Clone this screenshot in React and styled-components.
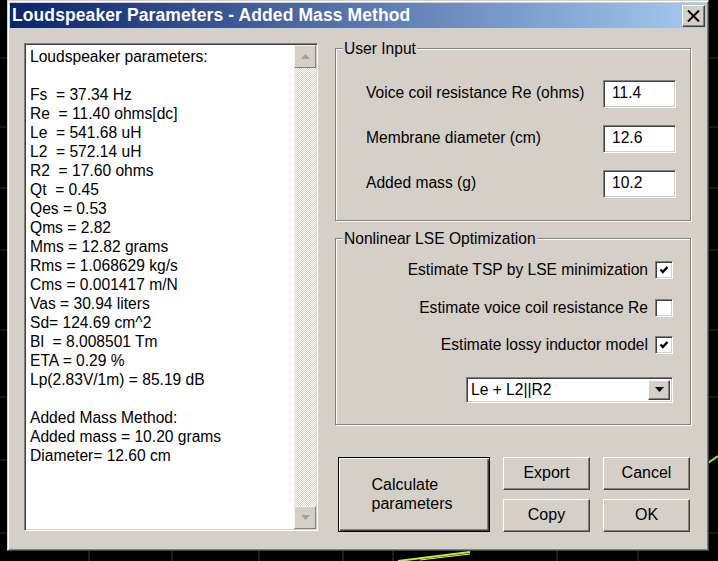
import React from 'react'
import styled, { createGlobalStyle } from 'styled-components'

const face = '#d4d0c8'
const shadow = '#808080'
const dark = '#404040'

const GlobalStyle = createGlobalStyle`
  html, body {
    margin: 0;
    padding: 0;
    background: #000;
  }
  body {
    font-family: "Liberation Sans", Arial, sans-serif;
    font-size: 15.6px;
    color: #000;
  }
`

const Screen = styled.div`
  position: relative;
  width: 718px;
  height: 561px;
  overflow: hidden;
  background: #000;
`

const Chart = styled.svg`
  position: absolute;
  left: 0;
  top: 0;
`

const Window = styled.div`
  position: relative;
  margin-left: 7px;
  width: 702px;
  height: 551px;
  box-sizing: border-box;
  background: ${face};
  border: 1px solid;
  border-color: ${face} ${dark} ${dark} ${face};
  box-shadow: inset 1px 1px #fff, inset -1px -1px ${shadow};
  padding: 2px;
  display: flex;
  flex-direction: column;
`

const TitleBar = styled.div`
  height: 25px;
  display: flex;
  align-items: center;
  justify-content: space-between;
  padding: 0 1px 0 2px;
  background: linear-gradient(to right, #0a246a, #a6caf0);
`

const Title = styled.div`
  color: #fff;
  font-weight: bold;
  font-size: 17.5px;
  letter-spacing: 0.1px;
`

const CloseButton = styled.div`
  width: 23px;
  height: 22px;
  box-sizing: border-box;
  background: ${face};
  border: 1px solid;
  border-color: #fff ${dark} ${dark} #fff;
  box-shadow: inset -1px -1px ${shadow};
  display: flex;
  align-items: center;
  justify-content: center;
`

const Body = styled.div`
  flex: 1;
  display: flex;
  padding: 15px 15px 0 14px;
  gap: 17px;
`

const TextPanel = styled.div`
  width: 294px;
  height: 488px;
  box-sizing: border-box;
  border: 1px solid;
  border-color: ${shadow} #fff #fff ${shadow};
  padding: 1px;
  box-shadow: inset 1px 1px ${dark}, inset -1px -1px ${face};
  display: flex;
`

const TextArea = styled.div`
  flex: 1;
  background: #fff;
  padding: 2px 4px;
  line-height: 19px;
  white-space: pre;
  overflow: hidden;
`

const ScrollBar = styled.div`
  width: 22px;
  display: flex;
  flex-direction: column;
`

const ScrollButton = styled.div`
  height: 23px;
  box-sizing: border-box;
  background: ${face};
  border: 1px solid;
  border-color: #f4f2ee ${shadow} ${shadow} #f4f2ee;
  display: flex;
  align-items: center;
  justify-content: center;
`

const Track = styled.div`
  flex: 1;
  background-color: #fff;
  background-image: repeating-conic-gradient(${face} 0 25%, #fff 0 50%);
  background-size: 2px 2px;
`

const RightColumn = styled.div`
  width: 356px;
  display: flex;
  flex-direction: column;
  margin-top: -4px;
`

const GroupBox = styled.fieldset`
  margin: ${(p) => p.$top || 0}px 0 0 0;
  padding: 0;
  min-width: 0;
  border: 1px solid ${shadow};
  box-shadow: inset 1px 1px #fff, 1px 1px #fff;
`

const Legend = styled.legend`
  margin-left: 7px;
  padding: 0 1px;
  line-height: 19px;
  background: ${face};
`

const InputGrid = styled.div`
  display: grid;
  grid-template-columns: 1fr 73px;
  row-gap: 17px;
  align-items: center;
  padding: 22px 14px 22px 30px;
`

const Label = styled.div`
  padding-bottom: 2px;
`

const TextInput = styled.div`
  height: 28px;
  box-sizing: border-box;
  background: #fff;
  border: 1px solid;
  border-color: ${shadow} #fff #fff ${shadow};
  box-shadow: inset 1px 1px ${dark}, inset -1px -1px ${face};
  padding: 2px 0 0 8px;
  line-height: 20px;
`

const OptionList = styled.div`
  display: flex;
  flex-direction: column;
  align-items: flex-end;
  gap: 19.5px;
  padding: 13px 17px 21px 0;
`

const CheckRow = styled.div`
  display: flex;
  align-items: center;
  gap: 7px;
  height: 18px;
`

const CheckBox = styled.div`
  width: 18px;
  height: 18px;
  box-sizing: border-box;
  background: #fff;
  border: 1px solid;
  border-color: ${shadow} #fff #fff ${shadow};
  box-shadow: inset 1px 1px ${dark}, inset -1px -1px ${face};
  display: flex;
  align-items: center;
  justify-content: center;
`

const Select = styled.div`
  margin-top: 3px;
  width: 207px;
  height: 26px;
  box-sizing: border-box;
  background: #fff;
  border: 1px solid;
  border-color: ${shadow} #fff #fff ${shadow};
  box-shadow: inset 1px 1px ${dark}, inset -1px -1px ${face};
  padding: 2px;
  display: flex;
  align-items: center;
`

const SelectValue = styled.div`
  flex: 1;
  padding-left: 2px;
`

const DropButton = styled.div`
  width: 22px;
  height: 100%;
  box-sizing: border-box;
  background: ${face};
  border: 1px solid;
  border-color: #fff ${dark} ${dark} #fff;
  box-shadow: inset -1px -1px ${shadow};
  display: flex;
  align-items: center;
  justify-content: center;
`

const ButtonGrid = styled.div`
  margin: 32px 0 0 3px;
  display: grid;
  grid-template-columns: 152px 87px 87px;
  grid-template-rows: 33px 33px;
  column-gap: 13px;
  row-gap: 9px;
`

const Button = styled.div`
  box-sizing: border-box;
  background: ${face};
  border: 1px solid;
  border-color: #fff ${dark} ${dark} #fff;
  box-shadow: inset -1px -1px ${shadow};
  display: flex;
  align-items: center;
  justify-content: center;
  font-size: 16px;
  ${(p) =>
    p.$default &&
    `
    grid-row: span 2;
    border: 1px solid #000;
    box-shadow: inset 1px 1px #fff, inset -1px -1px ${dark}, inset -2px -2px ${shadow};
  `}
`

const ButtonText = styled.div`
  text-align: left;
  line-height: 19px;
  margin-right: 4px;
`

const Tick = () => (
  <svg width="12" height="12" viewBox="0 0 12 12">
    <path d="M2.5 5.5 L4.8 8 L9.5 3" stroke="#000" strokeWidth="2.4" fill="none" />
  </svg>
)

const Arrow = ({ up, color }) => (
  <svg width="9" height="5" viewBox="0 0 9 5">
    <path d={up ? 'M0 5 L4.5 0 L9 5 Z' : 'M0 0 L9 0 L4.5 5 Z'} fill={color} />
  </svg>
)

const results = [
  'Loudspeaker parameters:',
  '',
  'Fs  = 37.34 Hz',
  'Re  = 11.40 ohms[dc]',
  'Le  = 541.68 uH',
  'L2  = 572.14 uH',
  'R2  = 17.60 ohms',
  'Qt  = 0.45',
  'Qes = 0.53',
  'Qms = 2.82',
  'Mms = 12.82 grams',
  'Rms = 1.068629 kg/s',
  'Cms = 0.001417 m/N',
  'Vas = 30.94 liters',
  'Sd= 124.69 cm^2',
  'Bl  = 8.008501 Tm',
  'ETA = 0.29 %',
  'Lp(2.83V/1m) = 85.19 dB',
  '',
  'Added Mass Method:',
  'Added mass = 10.20 grams',
  'Diameter= 12.60 cm',
]

const inputs = [
  { label: 'Voice coil resistance Re (ohms)', value: '11.4' },
  { label: 'Membrane diameter (cm)', value: '12.6' },
  { label: 'Added mass (g)', value: '10.2' },
]

const options = [
  { label: 'Estimate TSP by LSE minimization', checked: true },
  { label: 'Estimate voice coil resistance Re', checked: false },
  { label: 'Estimate lossy inductor model', checked: true },
]

const hLines = [58, 127, 188, 250, 330, 397, 460, 533]
const vLines = [89, 172, 259, 343, 393, 557, 638]

export default function App() {
  return (
    <Screen>
      <GlobalStyle />
      <Chart width="718" height="561">
        {hLines.map((y) => (
          <line key={y} x1="0" x2="718" y1={y} y2={y} stroke="#2e2e2e" />
        ))}
        {vLines.map((x) => (
          <line key={x} x1={x} x2={x} y1="0" y2="561" stroke="#3a3a3a" />
        ))}
        <path d="M398 561 L470 552" stroke="#b8f040" strokeWidth="2" fill="none" />
        <path d="M420 560 L470 554" stroke="#e8f060" strokeWidth="1" fill="none" />
        <path d="M708 463 L718 456" stroke="#9be030" strokeWidth="2" fill="none" />
      </Chart>
      <Window>
        <TitleBar>
          <Title>Loudspeaker Parameters - Added Mass Method</Title>
          <CloseButton>
            <svg width="13" height="12" viewBox="0 0 13 12">
              <path d="M1 0.5 L12 11.5 M12 0.5 L1 11.5" stroke="#000" strokeWidth="2" />
            </svg>
          </CloseButton>
        </TitleBar>
        <Body>
          <TextPanel>
            <TextArea>{results.join('\n')}</TextArea>
            <ScrollBar>
              <ScrollButton>
                <Arrow up color="#a0a0a0" />
              </ScrollButton>
              <Track />
              <ScrollButton>
                <Arrow color="#a0a0a0" />
              </ScrollButton>
            </ScrollBar>
          </TextPanel>
          <RightColumn>
            <GroupBox>
              <Legend>User Input</Legend>
              <InputGrid>
                {inputs.map((f) => (
                  <React.Fragment key={f.label}>
                    <Label>{f.label}</Label>
                    <TextInput>{f.value}</TextInput>
                  </React.Fragment>
                ))}
              </InputGrid>
            </GroupBox>
            <GroupBox $top={8}>
              <Legend>Nonlinear LSE Optimization</Legend>
              <OptionList>
                {options.map((o) => (
                  <CheckRow key={o.label}>
                    <span>{o.label}</span>
                    <CheckBox>{o.checked && <Tick />}</CheckBox>
                  </CheckRow>
                ))}
                <Select>
                  <SelectValue>Le + L2||R2</SelectValue>
                  <DropButton>
                    <Arrow color="#000" />
                  </DropButton>
                </Select>
              </OptionList>
            </GroupBox>
            <ButtonGrid>
              <Button $default>
                <ButtonText>
                  Calculate
                  <br />
                  parameters
                </ButtonText>
              </Button>
              <Button>Export</Button>
              <Button>Cancel</Button>
              <Button>Copy</Button>
              <Button>OK</Button>
            </ButtonGrid>
          </RightColumn>
        </Body>
      </Window>
    </Screen>
  )
}
